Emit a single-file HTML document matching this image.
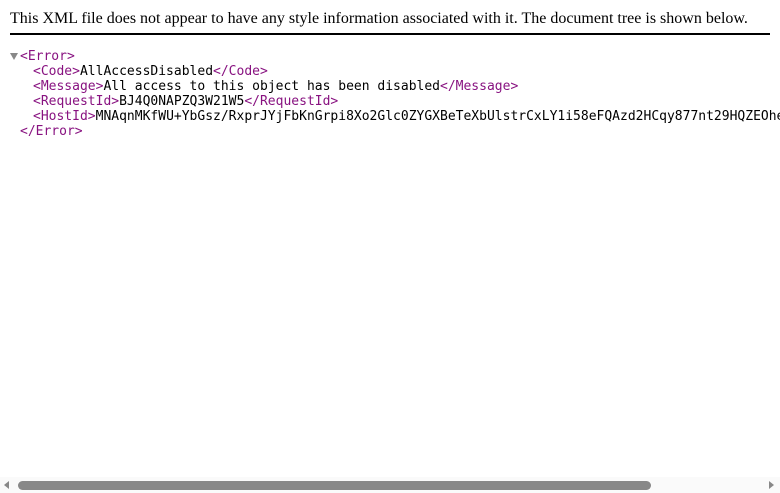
<!DOCTYPE html>
<html><head><style>
html,body{margin:0;padding:0;width:780px;height:493px;overflow:hidden;background:#fff}
.hdr{position:absolute;left:10px;top:0;width:760px;height:35px;border-bottom:2px solid #000;font:16px "Liberation Serif",serif;color:#000;line-height:18px;padding-top:10px;box-sizing:border-box;white-space:nowrap}
.tree{position:absolute;left:0;top:49px;font:13px "DejaVu Sans Mono",monospace;line-height:15px;white-space:pre;color:#000}
.t{color:#881280}
.line{position:absolute;left:0;height:15px}
.arrow{position:absolute;left:10px;top:53px;width:0;height:0;border-left:4px solid transparent;border-right:4px solid transparent;border-top:7px solid #888}
.sb{position:absolute;left:0;top:477px;width:780px;height:16px;background:#fafafa}
.thumb{position:absolute;left:18px;top:481px;width:633px;height:9px;background:#888;border-radius:5px}
.la{position:absolute;left:4px;top:481px;border-top:4px solid transparent;border-bottom:4px solid transparent;border-right:5px solid #888;width:0;height:0}
.ra{position:absolute;left:769px;top:481px;border-top:4px solid transparent;border-bottom:4px solid transparent;border-left:5px solid #888;width:0;height:0}
</style></head><body>
<div class="hdr">This XML file does not appear to have any style information associated with it. The document tree is shown below.</div>
<div class="arrow"></div>
<div class="tree">
<div class="line" style="top:0;left:20px"><span class="t">&lt;Error&gt;</span></div>
<div class="line" style="top:15px;left:33px"><span class="t">&lt;Code&gt;</span>AllAccessDisabled<span class="t">&lt;/Code&gt;</span></div>
<div class="line" style="top:30px;left:33px"><span class="t">&lt;Message&gt;</span>All access to this object has been disabled<span class="t">&lt;/Message&gt;</span></div>
<div class="line" style="top:45px;left:33px"><span class="t">&lt;RequestId&gt;</span>BJ4Q0NAPZQ3W21W5<span class="t">&lt;/RequestId&gt;</span></div>
<div class="line" style="top:60px;left:33px"><span class="t">&lt;HostId&gt;</span>MNAqnMKfWU+YbGsz/RxprJYjFbKnGrpi8Xo2Glc0ZYGXBeTeXbUlstrCxLY1i58eFQAzd2HCqy877nt29HQZEOhe</div>
<div class="line" style="top:75px;left:20px"><span class="t">&lt;/Error&gt;</span></div>
</div>
<div class="sb"></div><div class="thumb"></div><div class="la"></div><div class="ra"></div>
</body></html>
